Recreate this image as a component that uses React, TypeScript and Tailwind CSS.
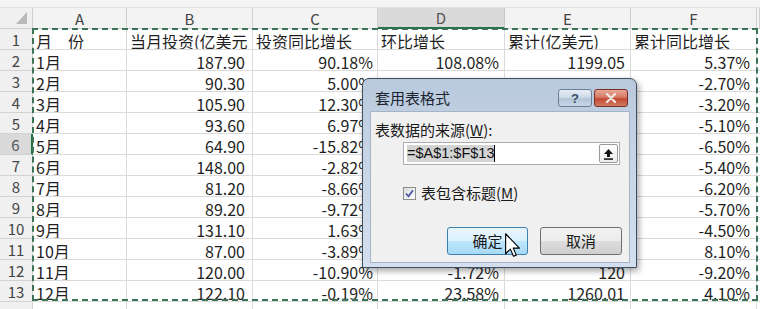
import React from "react";

const data: string[][] = [
  ["月\u3000份", "当月投资(亿美元", "投资同比增长", "环比增长", "累计(亿美元)", "累计同比增长"],
  ["1月", "187.90", "90.18%", "108.08%", "1199.05", "5.37%"],
  ["2月", "90.30", "5.00%", "-51.94%", "1289.35", "-2.70%"],
  ["3月", "105.90", "12.30%", "17.28%", "1395.25", "-3.20%"],
  ["4月", "93.60", "6.97%", "-11.61%", "1488.85", "-5.10%"],
  ["5月", "64.90", "-15.82%", "-30.66%", "1553.75", "-6.50%"],
  ["6月", "148.00", "-2.82%", "128.04%", "1701.75", "-5.40%"],
  ["7月", "81.20", "-8.66%", "-45.14%", "1782.95", "-6.20%"],
  ["8月", "89.20", "-9.72%", "9.85%", "1872.15", "-5.70%"],
  ["9月", "131.10", "1.63%", "46.97%", "2003.25", "-4.50%"],
  ["10月", "87.00", "-3.89%", "-33.64%", "2090.25", "8.10%"],
  ["11月", "120.00", "-10.90%", "-1.72%", "120", "-9.20%"],
  ["12月", "122.10", "-0.19%", "23.58%", "1260.01", "4.10%"],
];

const numPad = ["pl-[2px]", "pr-[7px]", "pr-[4px]", "pr-[5px]", "pr-[5px]", "pr-[6px]"];
const letters = ["A", "B", "C", "D", "E", "F", ""];

const FONT = "font-['Noto_Sans_CJK_SC','Noto_Sans',sans-serif]";

function Cursor() {
  return (
    <svg className="absolute left-[505px] top-[233px]" width="15" height="24" viewBox="0 0 12 19">
      <path
        d="M0.5 0.5 L0.5 16.5 L4.3 12.8 L6.8 18.5 L9 17.6 L6.6 12 L11.5 12 Z"
        fill="#ffffff"
        stroke="#000000"
        strokeWidth="0.9"
        strokeLinejoin="round"
      />
    </svg>
  );
}

function Dialog() {
  return (
    <div className="absolute left-[362px] top-[78px] w-[275px] h-[190px] rounded-t-[7px] border border-[#3f4e61] bg-[linear-gradient(180deg,#b9c9dd_0%,#c6d4e5_40%,#d3dfee_100%)] shadow-[2px_3px_6px_rgba(0,0,0,0.35)] flex flex-col pl-[7px] pr-[6px] pb-[4px]">
      <div className="h-[32px] flex items-start justify-between">
        <div className="pt-[9px] pl-[5px] text-[15px] leading-[20px] text-[#1b2430]">套用表格式</div>
        <div className="pt-[10px] pr-[2px] flex gap-[2px]">
          <div className="w-[34px] h-[18px] rounded-[3px] border border-[#6c7e96] bg-[linear-gradient(180deg,#e6edf5_0%,#cfdbe8_45%,#b3c4d8_55%,#c9d7e6_100%)] flex items-center justify-center text-[13px] leading-none font-bold text-[#3a4d66] font-['Liberation_Sans',sans-serif]">
            ?
          </div>
          <div className="w-[34px] h-[18px] rounded-[3px] border border-[#7a2e24] bg-[linear-gradient(180deg,#e8a898_0%,#d67a66_45%,#c44a33_55%,#d17a62_100%)] flex items-center justify-center">
            <svg width="12" height="10" viewBox="0 0 12 10">
              <path d="M2 1 L10 9 M10 1 L2 9" stroke="#f4e6e2" strokeWidth="2.4" strokeLinecap="round" />
            </svg>
          </div>
        </div>
      </div>
      <div className="flex-1 bg-[#f0f0f0] border border-[#a4b3c6] flex flex-col">
        <div className="mt-[8px] pl-[4px] text-[15px] leading-[20px] text-[#1a1a1a]">
          表数据的来源(<span className="underline">W</span>):
        </div>
        <div className="mt-[2px] ml-[32px] w-[217px] h-[23px] bg-white border border-[#abadb3] flex items-center justify-between pl-[3px] pr-[1px]">
          <div className="flex items-center">
            <span className="bg-[#d4d4d4] text-[14.5px] leading-[17px] text-[#111] font-['Liberation_Sans',sans-serif]">
              =$A$1:$F$13
            </span>
            <span className="w-[1px] h-[17px] bg-black" />
          </div>
          <div className="w-[19px] h-[19px] rounded-[2px] border border-[#9a9a9a] bg-[linear-gradient(180deg,#ffffff,#ececec)] flex items-center justify-center">
            <svg width="11" height="12" viewBox="0 0 11 12">
              <path d="M5.5 1 L10 6 L7 6 L7 9 L4 9 L4 6 L1 6 Z" fill="#111" />
              <rect x="1" y="10.3" width="9" height="1.5" fill="#111" />
            </svg>
          </div>
        </div>
        <div className="mt-[18px] ml-[32px] flex items-center gap-[5px]">
          <div className="w-[13px] h-[13px] border border-[#8e8f8f] bg-[linear-gradient(135deg,#dcdcdc,#ffffff)] flex items-center justify-center">
            <svg width="9" height="9" viewBox="0 0 9 9">
              <path d="M1 4.5 L3.5 7.3 L8 1.3" fill="none" stroke="#4c5ba8" strokeWidth="1.8" />
            </svg>
          </div>
          <div className="text-[15px] leading-[20px] text-[#1a1a1a]">
            表包含标题(<span className="underline">M</span>)
          </div>
        </div>
        <div className="mt-[24px] ml-[76px] flex gap-[12px]">
          <div className="w-[81px] h-[28px] rounded-[3px] border border-[#3c7fb1] bg-[linear-gradient(180deg,#eaf6fd_0%,#d9f0fc_50%,#bee6fd_51%,#a7d9f5_100%)] flex items-center justify-center text-[15px] text-[#1a1a1a]">
            确定
          </div>
          <div className="w-[82px] h-[28px] rounded-[3px] border border-[#707070] bg-[linear-gradient(180deg,#f2f2f2_0%,#ebebeb_50%,#dddddd_51%,#cfcfcf_100%)] flex items-center justify-center text-[15px] text-[#1a1a1a]">
            取消
          </div>
        </div>
      </div>
    </div>
  );
}

export default function App() {
  return (
    <div className={`relative w-[760px] h-[309px] overflow-hidden bg-white ${FONT}`}>
      <div className="grid grid-cols-[33px_94px_126px_125px_127px_126px_126px_1fr] grid-rows-[8px_21px_repeat(13,21px)_1fr] h-[309px]">
        <div className="col-span-8 bg-[#f4f4f4] border-b border-[#e2e2e2]" />
        {/* header row */}
        <div className="bg-[#f0f0f0] border-r border-b border-[#cfcfcf] flex items-end justify-end pr-[5px] pb-[4px]">
          <svg width="11" height="12" viewBox="0 0 11 12">
            <polygon points="11,0 11,12 0,12" fill="#b9b9b9" />
          </svg>
        </div>
        {letters.map((l, i) =>
          i === 3 ? (
            <div
              key={i}
              className="bg-[#dadada] border-r border-[#c8c8c8] border-b-2 border-b-[#217346] flex items-center justify-center text-[15px] text-[#555] pt-[2px]"
            >
              {l}
            </div>
          ) : (
            <div
              key={i}
              className="bg-[#f3f3f3] border-r border-b border-[#d0d0d0] flex items-center justify-center text-[15px] text-[#444] pt-[2px]"
            >
              {l}
            </div>
          )
        )}
        {data.map((row, r) => (
          <React.Fragment key={r}>
            {r === 5 ? (
              <div className="bg-[#dadada] border-b border-[#cfcfcf] border-r-2 border-r-[#217346] flex items-center justify-center text-[15px] text-[#555] pt-[2px]">
                {r + 1}
              </div>
            ) : (
              <div className="bg-[#f0f0f0] border-r border-b border-[#d2d2d2] flex items-center justify-center text-[15px] text-[#444] pt-[2px]">
                {r + 1}
              </div>
            )}
            {row.map((v, c) => {
              const left = c === 0 || r === 0;
              return (
                <div
                  key={c}
                  className={`border-r border-b border-[#dadada] overflow-hidden whitespace-nowrap flex items-center pt-[3px] text-[16px] leading-[18px] text-[#1f1f1f] ${
                    left ? "justify-start pl-[3px]" : "justify-end " + numPad[c]
                  }`}
                >
                  {v}
                </div>
              );
            })}
            <div className="border-b border-[#dadada]" />
          </React.Fragment>
        ))}
        <div className="bg-[#f0f0f0] border-r border-[#d2d2d2]" />
        {[0, 1, 2, 3, 4, 5].map((i) => (
          <div key={i} className="border-r border-[#dadada]" />
        ))}
        <div />
      </div>
      {/* marching ants */}
      <div className="absolute left-[32px] top-[28px] w-[726px] h-[273px] border-2 border-dashed border-[#3d7356]" />
      <Dialog />
      <Cursor />
    </div>
  );
}
